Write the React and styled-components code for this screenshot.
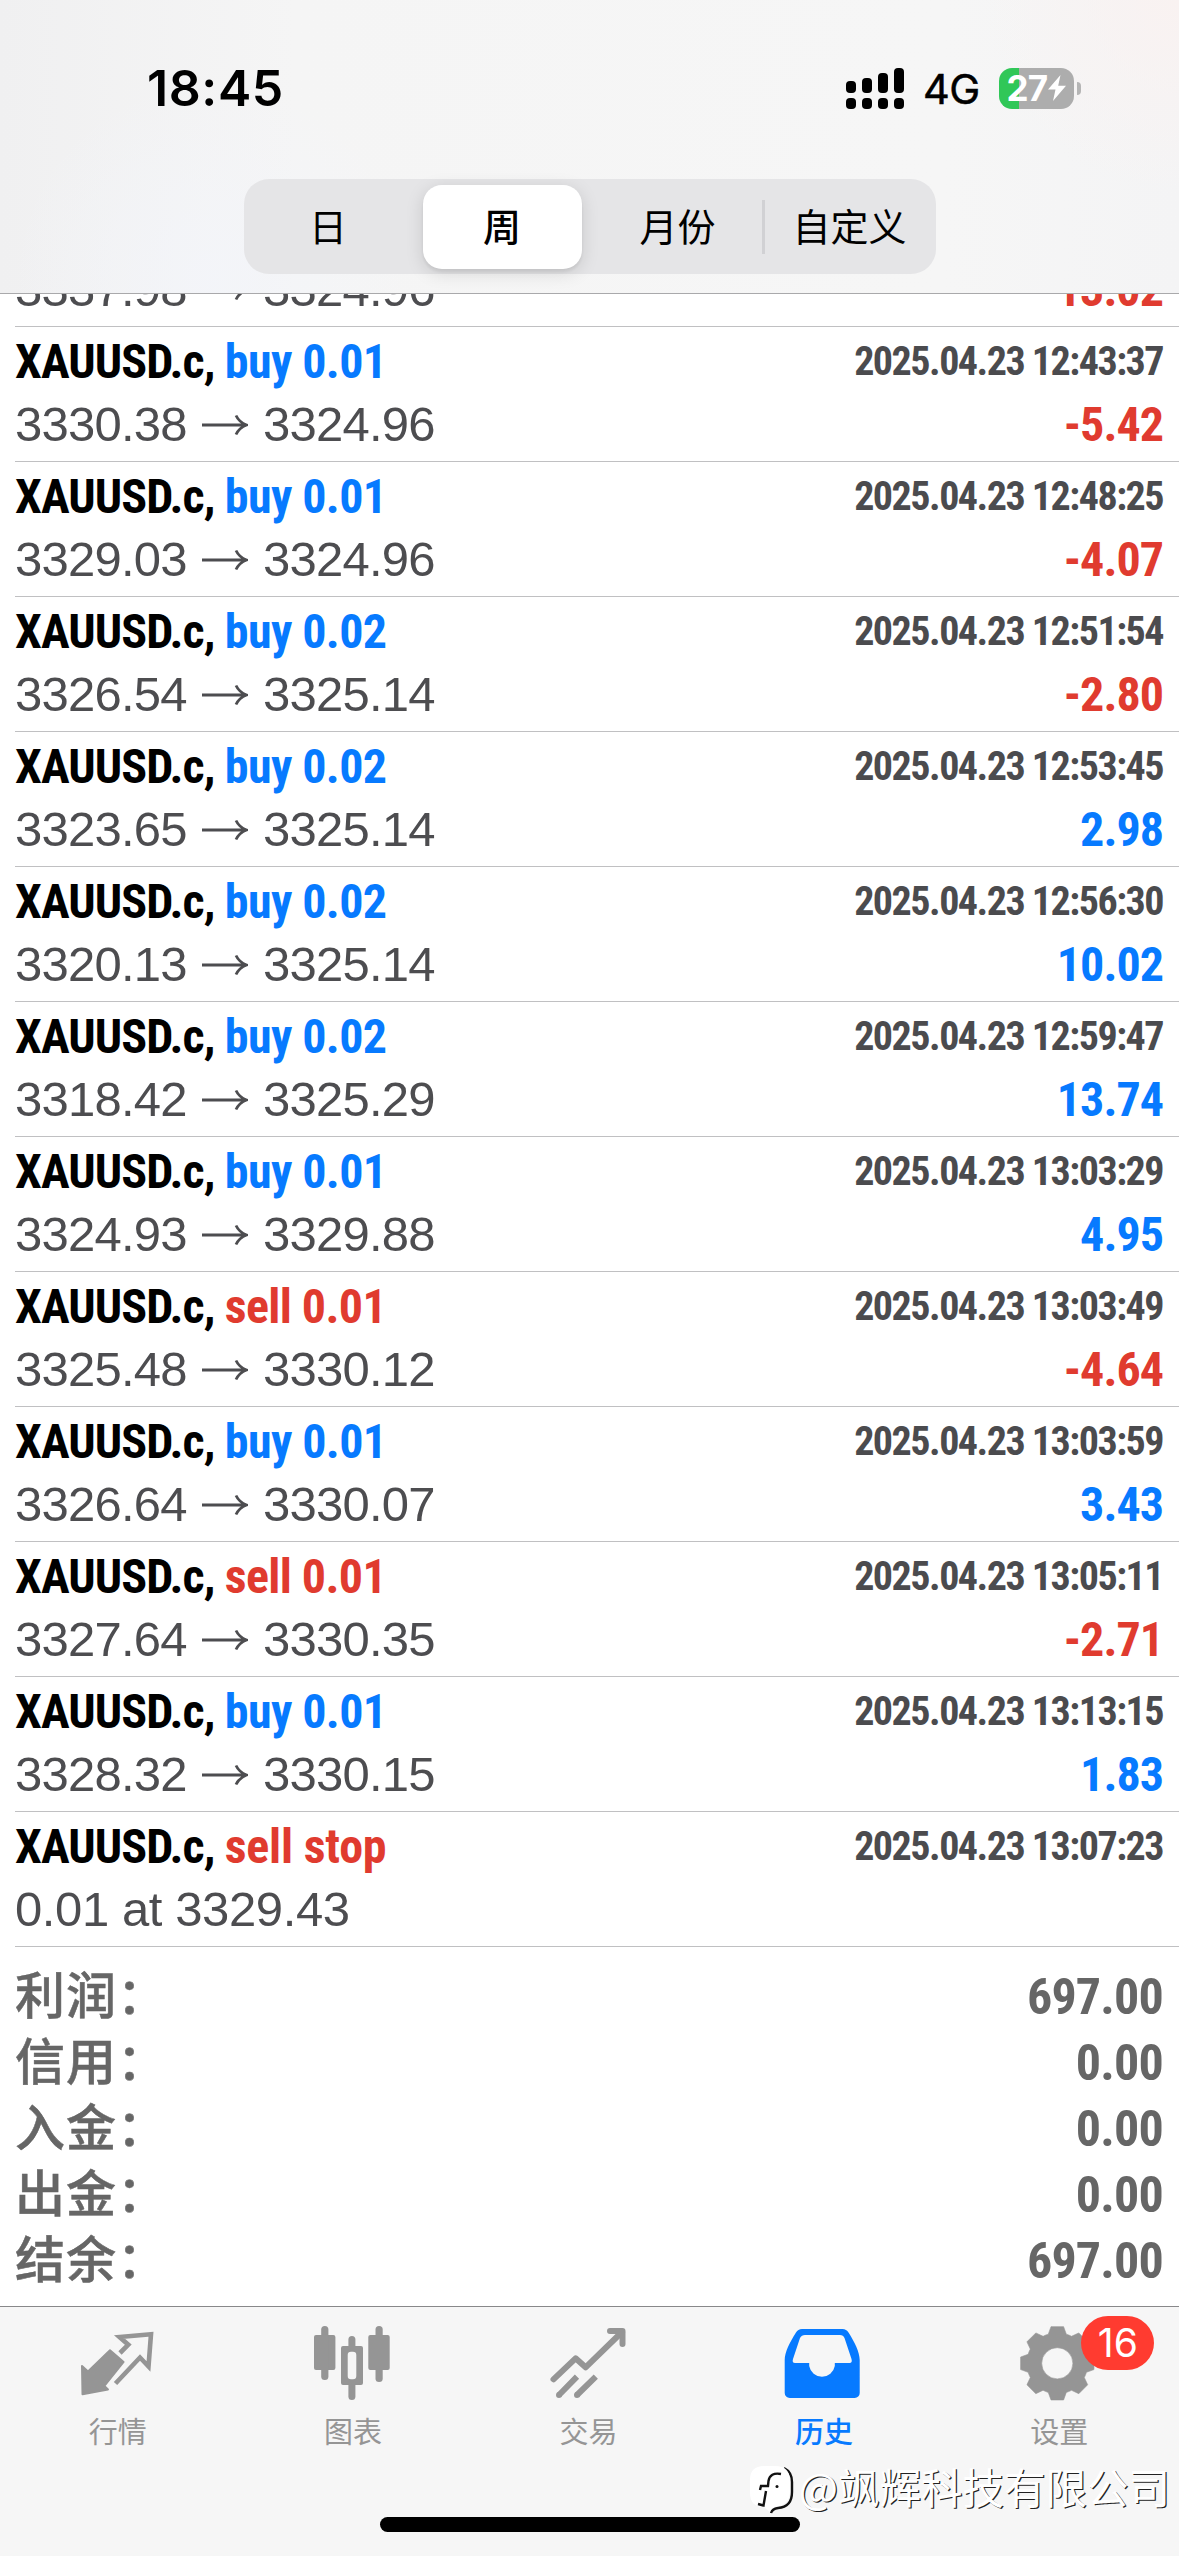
import React from "react";
import styled, { createGlobalStyle } from "styled-components";

const BLUE = "#077aff";
const RED = "#e03b2f";
const GREY = "#959595";
const CONDENSED = '"Roboto Condensed", "Liberation Sans", sans-serif';
const CJK = '"Noto Sans CJK SC", sans-serif';

const GlobalStyle = createGlobalStyle`
  * { box-sizing: border-box; }
  body { margin: 0; background: #fff; font-family: "Liberation Sans", "Noto Sans CJK SC", sans-serif; }
`;

const Screen = styled.div`
  position: relative;
  display: flex;
  flex-direction: column;
  width: 1179px;
  height: 2556px;
  overflow: hidden;
  background: #fff;
`;

/* ---------- header ---------- */
const Header = styled.header`
  display: flex;
  flex-direction: column;
  align-items: center;
  height: 294px;
  flex: none;
  border-bottom: 1px solid #a9a9ab;
  background:
    radial-gradient(circle at 18% 95%, rgba(243, 245, 250, 0.8), transparent 20%),
    radial-gradient(circle at 100% 0%, #f9f2f1, transparent 16%),
    linear-gradient(90deg, #f0f0f1, #f5f5f5 25%, #f6f6f6 80%, #f4f4f5);
`;

const StatusBar = styled.div`
  display: flex;
  align-items: center;
  justify-content: space-between;
  width: 100%;
  height: 176px;
  padding: 0 98px 0 147px;
`;

const Clock = styled.time`
  font: 600 50px Inter, sans-serif;
  letter-spacing: 0.6px;
  color: #000;
`;

const StatusIcons = styled.div`
  display: flex;
  align-items: center;
`;

const Network = styled.span`
  width: 76px;
  margin-left: 19px;
  padding-top: 2px;
  font: 400 41.5px Inter, sans-serif;
  letter-spacing: -0.6px;
  -webkit-text-stroke: 0.5px #000;
`;

const Battery = styled.div`
  display: flex;
  align-items: center;
  justify-content: center;
  gap: 1px;
  width: 75px;
  height: 41px;
  border-radius: 13px;
  background: linear-gradient(90deg, #30c758 20.5px, #adadad 20.5px);
  color: #fff;
  font: 700 35px Inter, sans-serif;
  letter-spacing: -0.8px;
`;

const BatteryCap = styled.div`
  width: 4px;
  height: 13px;
  margin-left: 3px;
  border-radius: 0 5px 5px 0;
  background: #b5b5b5;
`;

const Segments = styled.div`
  display: flex;
  align-items: center;
  width: 692px;
  height: 95px;
  margin-top: 3px;
  border-radius: 25px;
  background: #e5e5e7;
`;

const Segment = styled.div`
  display: flex;
  align-items: center;
  justify-content: center;
  width: ${(p) => (p.$on ? "159px" : "173px")};
  height: ${(p) => (p.$on ? "84px" : "54px")};
  margin: ${(p) => (p.$on ? "0 7px 0 6px" : "0")};
  padding: 0 ${(p) => p.$right || 0}px 4px ${(p) => p.$left || 0}px;
  border-radius: ${(p) => (p.$on ? "19px" : "0")};
  background: ${(p) => (p.$on ? "#fff" : "transparent")};
  box-shadow: ${(p) => (p.$on ? "0 4px 18px rgba(0,0,0,0.13), 0 3px 3px rgba(0,0,0,0.06)" : "none")};
  border-left: ${(p) => (p.$divided ? "3px solid #d1d1d4" : "none")};
  color: #000;
  font: ${(p) => (p.$on ? 500 : 400)} 38px ${CJK};
`;

/* ---------- deals ---------- */
const DealList = styled.main`
  display: flex;
  flex-direction: column;
  justify-content: flex-end;
  height: 1653px;
  flex: none;
  overflow: hidden;
`;

const Deal = styled.article`
  display: grid;
  grid-template-rows: ${(p) => (p.$partial ? "64px" : "70px 64px")};
  grid-template-columns: 1fr auto;
  flex: none;
  margin-left: 15px;
  padding-right: 16px;
  border-bottom: 1px solid #c0c0c2;
`;

const Title = styled.div`
  font: 700 48px/70px ${CONDENSED};
  letter-spacing: -0.92px;
  color: #000;
  white-space: pre;
`;

const Action = styled.span`
  letter-spacing: ${(p) => (p.$pending ? "-0.2px" : "-0.6px")};
  color: ${(p) => (p.$sell ? RED : BLUE)};
`;

const Time = styled.time`
  font: 700 40px/70px ${CONDENSED};
  letter-spacing: -1.5px;
  color: #4b4b4e;
`;

const Price = styled.div`
  display: flex;
  align-items: flex-start;
  font-size: 49px;
  line-height: 55px;
  letter-spacing: ${(p) => (p.$pending ? "-0.4px" : "-0.75px")};
  color: #4d4d50;
`;

const Arrow = styled.svg`
  width: 46px;
  height: 22px;
  margin: 17px 15px 0 15px;
`;

const Profit = styled.div`
  font: 700 48px/56px ${CONDENSED};
  letter-spacing: -0.95px;
  text-align: right;
  color: ${(p) => (p.$loss ? RED : BLUE)};
`;

/* ---------- summary ---------- */
const Summary = styled.section`
  flex: none;
  height: 359px;
  padding: 16px 16px 0 15px;
  color: #666;
`;

const SummaryRow = styled.div`
  display: flex;
  justify-content: space-between;
  height: 66px;
`;

const Label = styled.span`
  font: 500 50px/58px ${CJK};
  letter-spacing: 1px;
  -webkit-text-stroke: 0.5px #666;
`;

const Amount = styled.span`
  font: 700 50px/68px ${CONDENSED};
  letter-spacing: -0.8px;
`;

/* ---------- tab bar ---------- */
const TabBar = styled.footer`
  display: flex;
  flex-direction: column;
  align-items: center;
  flex: none;
  height: 250px;
  border-top: 1px solid #88888a;
  background: #f6f6f6;
`;

const Tabs = styled.nav`
  display: flex;
  width: 100%;
  height: 210px;
  padding-right: 2px;
`;

const Tab = styled.div`
  display: flex;
  flex: 1;
  flex-direction: column;
  align-items: center;
  gap: 10px;
  padding-top: 19px;
  color: ${(p) => (p.$on ? BLUE : GREY)};
  font: ${(p) => (p.$on ? 500 : 400)} 29px/36px ${CJK};
`;

const IconBox = styled.div`
  position: relative;
  width: 76px;
  height: 76px;
  svg { display: block; width: 76px; height: 76px; overflow: visible; }
`;

const Badge = styled.span`
  position: absolute;
  left: 60px;
  top: -10px;
  width: 73px;
  height: 54px;
  border-radius: 27px;
  background: #ff3b30;
  color: #fff;
  font: 400 39px/54px Inter, sans-serif;
  text-align: center;
`;

const HomeIndicator = styled.div`
  width: 420px;
  height: 15px;
  border-radius: 8px;
  background: #000;
`;

const Watermark = styled.div`
  position: absolute;
  right: 9px;
  bottom: 40px;
  display: flex;
  align-items: center;
  gap: 5px;
  color: #fff;
  font: 400 41.5px/60px ${CJK};
  text-shadow: 1.2px 1.2px 0.5px #222;
  svg { flex: none; margin-top: 5px; }
`;

const quotesIcon = (
  <svg viewBox="0 0 76 76">
    <path d="M2 40 8 45.5 30 24.3 43.6 36 24.4 60 28 63.4 2.5 68.3Z" fill={GREY} stroke={GREY} strokeWidth="2" strokeLinejoin="round" />
    <path d="M40 27 48.3 18.7 39.5 11 71 8.2 68.5 40.5 60 31.5 35.5 57.5" fill="none" stroke={GREY} strokeWidth="4.6" />
  </svg>
);

const chartIcon = (
  <svg viewBox="0 0 76 76" fill={GREY}>
    <rect x="-1" y="9" width="21.4" height="35" rx="2" />
    <rect x="6.2" y="0" width="7.2" height="54" rx="3.5" />
    <rect x="53.3" y="9" width="21.4" height="35" rx="2" />
    <rect x="60.5" y="0" width="7.2" height="56" rx="3.5" />
    <rect x="33.4" y="10" width="7" height="14" rx="3.5" />
    <rect x="33.4" y="55" width="7" height="19" rx="3.5" />
    <path fillRule="evenodd" d="M28 20H46a2 2 0 0 1 2 2V57a2 2 0 0 1-2 2H28a2 2 0 0 1-2-2V22a2 2 0 0 1 2-2ZM36 25.7a3.3 3.3 0 0 0-3.3 3.3V50a3.3 3.3 0 0 0 3.3 3.3H38a3.3 3.3 0 0 0 3.3-3.3V29a3.3 3.3 0 0 0-3.3-3.3Z" />
  </svg>
);

const tradeIcon = (
  <svg viewBox="0 0 76 76" fill="none" stroke={GREY} strokeWidth="6" strokeLinecap="round" strokeLinejoin="round">
    <path d="M2.5 53.3 24.6 32.3 34.6 41.3 71 6" />
    <path d="M59 5H71.5V18" />
    <path d="M8 69 26 50.7M26 69 44.8 50.7" strokeLinecap="butt" />
    <path d="M8 69h0M26 69h0" />
  </svg>
);

const historyIcon = (
  <svg viewBox="0 0 76 76" fill={BLUE}>
    <path
      fillRule="evenodd"
      d="M16 3H56.5Q60.5 3 62.5 6.5C68.5 16 73.7 26 73.7 34V67a5 5 0 0 1-5 5H3.7a5 5 0 0 1-5-5V34C-1.3 26 4 16 10 6.5Q12 3 16 3ZM19 9Q15.5 9 14 12L7 33Q5.8 37 9 37H23.2V40A13 13 0 0 0 48.8 40V37H63.5Q66.6 37 65.5 33L58.5 12Q57.3 9 54 9Z"
    />
  </svg>
);

const toothPoints = Array.from({ length: 8 }, (_, i) => {
  const profile = [[-0.38, 30.5], [-0.3, 30.5], [-0.17, 37.2], [0.17, 37.2], [0.3, 30.5], [0.38, 30.5]];
  return profile
    .map(([offset, radius]) => {
      const angle = (i * Math.PI) / 4 + offset;
      return `${(36.3 + radius * Math.sin(angle)).toFixed(2)} ${(37.3 - radius * Math.cos(angle)).toFixed(2)}`;
    })
    .join(" L");
}).join(" L");

const settingsIcon = (
  <svg viewBox="0 0 76 76" fill={GREY}>
    <path
      fillRule="evenodd"
      stroke={GREY}
      strokeWidth="0.6"
      strokeLinejoin="round"
      d={`M${toothPoints}ZM51.9 37.3a15.6 15.6 0 1 0-31.2 0a15.6 15.6 0 1 0 31.2 0Z`}
    />
  </svg>
);

const tabs = [
  { label: "行情", icon: quotesIcon },
  { label: "图表", icon: chartIcon },
  { label: "交易", icon: tradeIcon },
  { label: "历史", icon: historyIcon, on: true },
  { label: "设置", icon: settingsIcon, badge: "16" },
];

// The first deal is scrolled under the header, so only its price line is kept.
const deals = [
  [null, null, "3337.98", "3324.96", "-13.02"],
  ["buy 0.01", "2025.04.23 12:43:37", "3330.38", "3324.96", "-5.42"],
  ["buy 0.01", "2025.04.23 12:48:25", "3329.03", "3324.96", "-4.07"],
  ["buy 0.02", "2025.04.23 12:51:54", "3326.54", "3325.14", "-2.80"],
  ["buy 0.02", "2025.04.23 12:53:45", "3323.65", "3325.14", "2.98"],
  ["buy 0.02", "2025.04.23 12:56:30", "3320.13", "3325.14", "10.02"],
  ["buy 0.02", "2025.04.23 12:59:47", "3318.42", "3325.29", "13.74"],
  ["buy 0.01", "2025.04.23 13:03:29", "3324.93", "3329.88", "4.95"],
  ["sell 0.01", "2025.04.23 13:03:49", "3325.48", "3330.12", "-4.64"],
  ["buy 0.01", "2025.04.23 13:03:59", "3326.64", "3330.07", "3.43"],
  ["sell 0.01", "2025.04.23 13:05:11", "3327.64", "3330.35", "-2.71"],
  ["buy 0.01", "2025.04.23 13:13:15", "3328.32", "3330.15", "1.83"],
  ["sell stop", "2025.04.23 13:07:23", "0.01 at 3329.43", null, ""],
];

const summary = [
  ["利润：", "697.00"],
  ["信用：", "0.00"],
  ["入金：", "0.00"],
  ["出金：", "0.00"],
  ["结余：", "697.00"],
];

function Signal() {
  return (
    <svg width="58" height="41" viewBox="0 0 58 41">
      {[13, 10, 5, 0].map((top, i) => (
        <g key={top}>
          <rect x={i * 16} y={top} width="10" height={25 - top} rx="4" />
          <rect x={i * 16} y="30" width="10" height="11" rx="4" />
        </g>
      ))}
    </svg>
  );
}

function DealRow({ deal: [action, time, from, to, profit] }) {
  return (
    <Deal $partial={!action}>
      {action && (
        <>
          <Title>
            XAUUSD.c,{" "}
            <Action $sell={action.startsWith("sell")} $pending={!to}>
              {action}
            </Action>
          </Title>
          <Time>{time}</Time>
        </>
      )}
      <Price $pending={!to}>
        <span>{from}</span>
        {to && (
          <>
            <Arrow viewBox="0 0 46 22" fill="none" stroke="#4d4d50" strokeWidth="2.8">
              <path d="M0 11H44M34 1.5Q37 8 44.5 11Q37 14 34 20.5" />
            </Arrow>
            <span>{to}</span>
          </>
        )}
      </Price>
      <Profit $loss={profit.startsWith("-")}>{profit}</Profit>
    </Deal>
  );
}

export default function App() {
  return (
    <Screen>
      <GlobalStyle />
      <Header>
        <StatusBar>
          <Clock>18:45</Clock>
          <StatusIcons>
            <Signal />
            <Network>4G</Network>
            <Battery>
              27
              <svg width="18" height="26" viewBox="0 0 18 26" fill="#fff">
                <path d="M12.5 0 0 14.5H7.5L5 26 18 10.8H10.2Z" />
              </svg>
            </Battery>
            <BatteryCap />
          </StatusIcons>
        </StatusBar>
        <Segments>
          <Segment $right={4}>日</Segment>
          <Segment $on>周</Segment>
          <Segment $left={5}>月份</Segment>
          <Segment $divided>自定义</Segment>
        </Segments>
      </Header>
      <DealList>
        {deals.map((deal) => (
          <DealRow key={deal[2]} deal={deal} />
        ))}
      </DealList>
      <Summary>
        {summary.map(([label, amount]) => (
          <SummaryRow key={label}>
            <Label>{label}</Label>
            <Amount>{amount}</Amount>
          </SummaryRow>
        ))}
      </Summary>
      <TabBar>
        <Tabs>
          {tabs.map((tab) => (
            <Tab key={tab.label} $on={tab.on}>
              <IconBox>
                {tab.icon}
                {tab.badge && <Badge>{tab.badge}</Badge>}
              </IconBox>
              {tab.label}
            </Tab>
          ))}
        </Tabs>
        <HomeIndicator />
      </TabBar>
      <Watermark>
        <svg width="44" height="50" viewBox="0 0 44 50">
          <path d="M34 4Q42 8 42 18V28Q42 43 28 44Q22 45 21 49" fill="none" stroke="#111" strokeWidth="2.4" />
          <path d="M14 2H25Q40 2 40 17V27Q40 41 26 42.5Q21 43.5 20 48L14 43Q0 43 0 29V16Q0 2 14 2Z" fill="#fff" />
          <path d="M31 10Q20 8 18.5 17L18 22H11L10 26M16 27 13.5 41.5 8 40" fill="none" stroke="#111" strokeWidth="2.4" />
          <circle cx="27" cy="22.5" r="1.5" fill="#111" />
        </svg>
        <span>@飒辉科技有限公司</span>
      </Watermark>
    </Screen>
  );
}
